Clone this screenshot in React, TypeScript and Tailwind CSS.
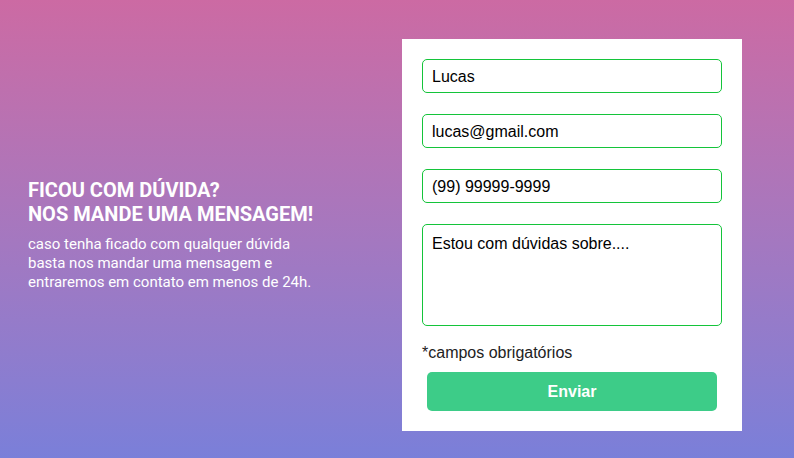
import { useState } from "react";

export default function App() {
  const [nome, setNome] = useState("Lucas");
  const [email, setEmail] = useState("lucas@gmail.com");
  const [tel, setTel] = useState("(99) 99999-9999");
  const [msg, setMsg] = useState("Estou com dúvidas sobre....");

  const field =
    "w-full h-[34px] rounded-[5px] border border-[#14c43a] bg-white px-[9px] pt-[2px] text-[16px] text-black outline-none font-['Liberation_Sans',Arial,sans-serif]";

  return (
    <div className="h-[458px] w-full bg-gradient-to-b from-[#cc6aa3] to-[#7a7fd9] flex items-center pt-[12px]">
      <div className="w-[402px] shrink-0 pl-[28px] text-white font-['Roboto',sans-serif]">
        <h1 className="text-[20px] font-bold leading-[24px]">
          FICOU COM DÚVIDA?
          <br />
          NOS MANDE UMA MENSAGEM!
        </h1>
        <p className="mt-[9px] w-[290px] text-[15px] leading-[19px]">
          caso tenha ficado com qualquer dúvida basta nos mandar uma mensagem e
          entraremos em contato em menos de 24h.
        </p>
      </div>

      <form
        className="w-[340px] shrink-0 bg-white p-[20px] flex flex-col"
        onSubmit={(e) => e.preventDefault()}
      >
        <input className={field} value={nome} onChange={(e) => setNome(e.target.value)} />
        <input className={`${field} mt-[21px]`} value={email} onChange={(e) => setEmail(e.target.value)} />
        <input className={`${field} mt-[21px]`} value={tel} onChange={(e) => setTel(e.target.value)} />
        <textarea
          className={`${field} mt-[21px] !h-[102px] !pt-[9px] resize-none leading-[19px]`}
          value={msg}
          onChange={(e) => setMsg(e.target.value)}
        />
        <p className="mt-[17px] text-[16px] leading-[20px] text-[#222] font-['Liberation_Sans',Arial,sans-serif]">
          *campos obrigatórios
        </p>
        <button
          type="submit"
          className="mt-[9px] mx-[5px] h-[39px] rounded-[5px] bg-[#3dcc88] text-white text-[16px] font-bold font-['Liberation_Sans',Arial,sans-serif]"
        >
          Enviar
        </button>
      </form>
    </div>
  );
}
